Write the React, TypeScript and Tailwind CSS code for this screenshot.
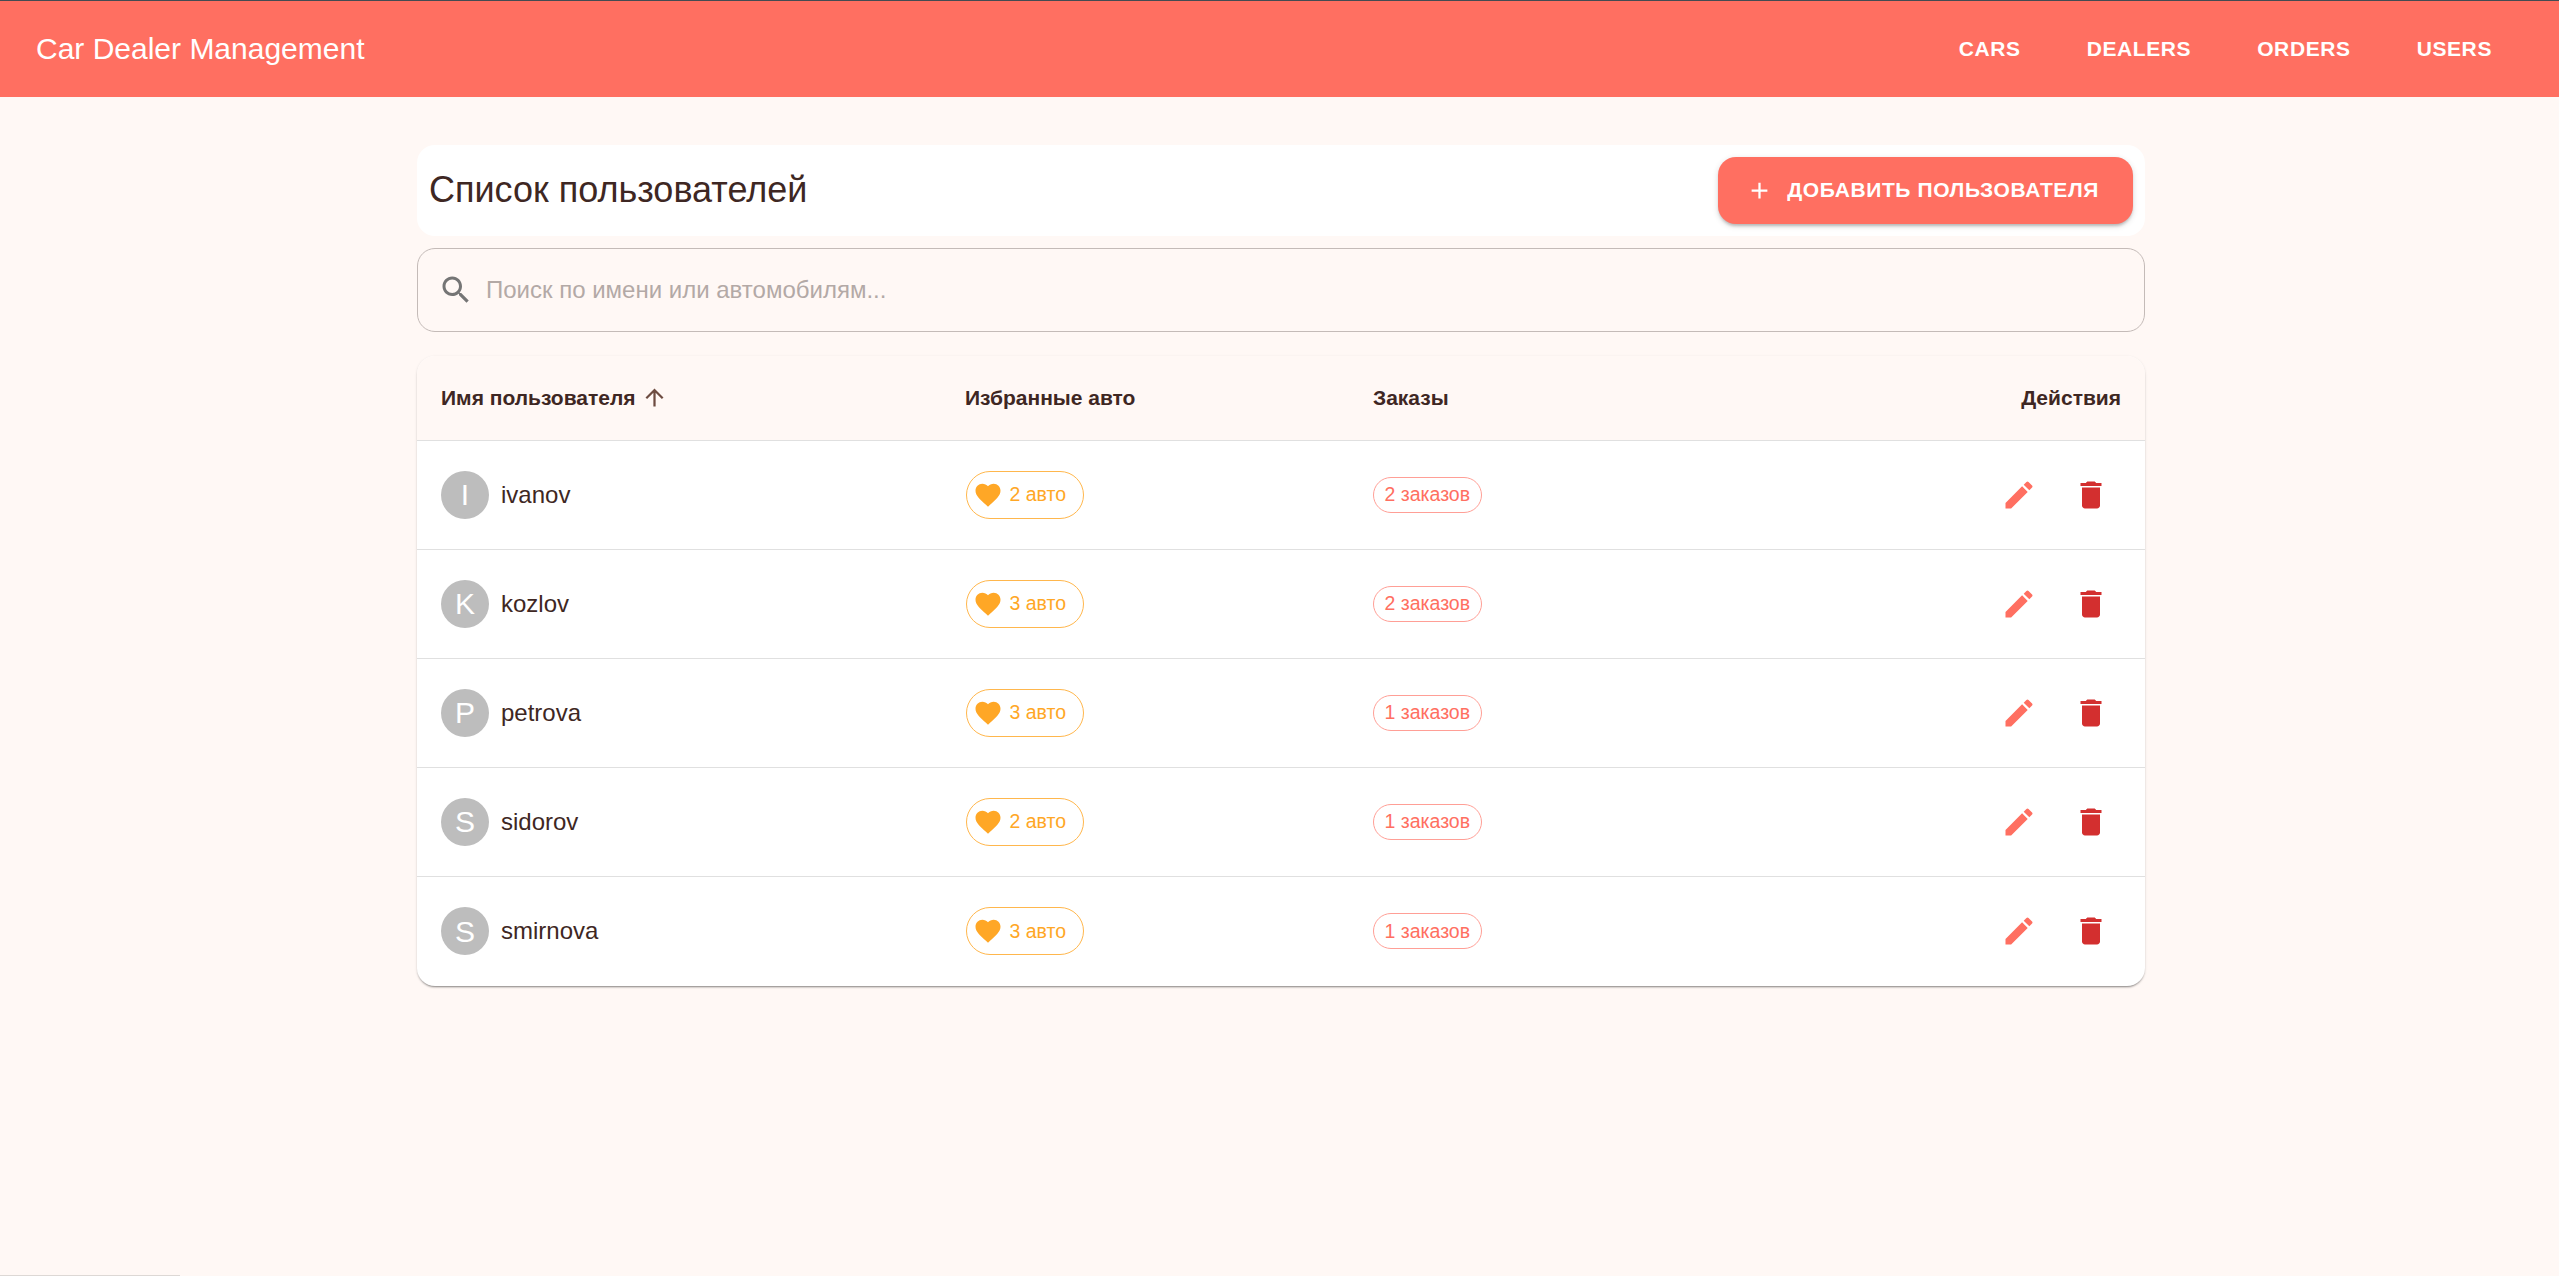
import type { ReactNode } from 'react'

const users = [
  { name: 'ivanov', favorites: 2, orders: 2 },
  { name: 'kozlov', favorites: 3, orders: 2 },
  { name: 'petrova', favorites: 3, orders: 1 },
  { name: 'sidorov', favorites: 2, orders: 1 },
  { name: 'smirnova', favorites: 3, orders: 1 },
]

function Icon({ d, className }: { d: string; className: string }) {
  return (
    <svg viewBox="0 0 24 24" fill="currentColor" className={className}>
      <path d={d} />
    </svg>
  )
}

const paths = {
  heart: 'm12 21.35-1.45-1.32C5.4 15.36 2 12.28 2 8.5 2 5.42 4.42 3 7.5 3c1.74 0 3.41.81 4.5 2.09C13.09 3.81 14.76 3 16.5 3 19.58 3 22 5.42 22 8.5c0 3.78-3.4 6.86-8.55 11.54L12 21.35z',
  edit: 'M3 17.25V21h3.75L17.81 9.94l-3.75-3.75L3 17.25zM20.71 7.04c.39-.39.39-1.02 0-1.41l-2.34-2.34a.9959.9959 0 0 0-1.41 0l-1.83 1.83 3.75 3.75 1.83-1.83z',
  trash: 'M6 19c0 1.1.9 2 2 2h8c1.1 0 2-.9 2-2V7H6v12zM19 4h-3.5l-1-1h-5l-1 1H5v2h14V4z',
  search: 'M15.5 14h-.79l-.28-.27C15.41 12.59 16 11.11 16 9.5 16 5.91 13.09 3 9.5 3S3 5.91 3 9.5 5.91 16 9.5 16c1.61 0 3.09-.59 4.23-1.57l.27.28v.79l5 4.99L20.49 19l-4.99-5zm-6 0C7.01 14 5 11.99 5 9.5S7.01 5 9.5 5 14 7.01 14 9.5 11.99 14 9.5 14z',
  add: 'M19 13h-6v6h-2v-6H5v-2h6V5h2v6h6v2z',
  arrowUp: 'M4 12l1.41 1.41L11 7.83V20h2V7.83l5.58 5.59L20 12l-8-8-8 8z',
}

function NavLink({ children }: { children: ReactNode }) {
  return <a className="px-[24px] py-[9px] text-[21px] leading-[36px] font-bold tracking-[0.6px] text-white">{children}</a>
}

function HeadCell({ children, className = '' }: { children: ReactNode; className?: string }) {
  return <th className={`px-[24px] text-left text-[21px] font-bold text-[#3e2723] ${className}`}>{children}</th>
}

function UserRow({ name, favorites, orders }: { name: string; favorites: number; orders: number }) {
  return (
    <tr className="h-[109px] border-b border-[#e0e0e0] last:h-[110px] last:border-b-0">
      <td className="px-[24px]">
        <div className="flex items-center gap-[12px]">
          <div className="flex h-[48px] w-[48px] items-center justify-center rounded-full bg-[#bdbdbd] text-[30px] text-white">
            {name[0].toUpperCase()}
          </div>
          <span className="text-[24px] text-[#3e2723]">{name}</span>
        </div>
      </td>
      <td className="pr-[24px] pl-[25px]">
        <div className="inline-flex h-[48px] items-center rounded-full border border-[#ffb74d] pr-[17px] pl-[6px] text-[19.5px] text-[#ffa726] align-middle">
          <Icon d={paths.heart} className="h-[30px] w-[30px]" />
          <span className="ml-[6.5px]">{favorites} авто</span>
        </div>
      </td>
      <td className="px-[24px]">
        <div className="inline-flex h-[36px] items-center rounded-full border border-[#ff9f96] px-[10.5px] text-[19.5px] text-[#ff6f61] align-middle">
          {orders} заказов
        </div>
      </td>
      <td className="pr-[18px] text-right">
        <div className="flex items-center justify-end">
          <button className="flex h-[60px] w-[72px] items-center justify-center text-[#ff6f61]">
            <Icon d={paths.edit} className="h-[36px] w-[36px]" />
          </button>
          <button className="flex h-[60px] w-[72px] items-center justify-center text-[#d32f2f]">
            <Icon d={paths.trash} className="h-[36px] w-[36px]" />
          </button>
        </div>
      </td>
    </tr>
  )
}

export default function App() {
  return (
    <div className="relative min-h-screen bg-[#fff8f5] font-['Liberation_Sans',Arial,sans-serif]">
      <header className="flex h-[97px] items-center justify-between border-t border-[#444b52] bg-[#ff6f61] pr-[43px] pl-[36px]">
        <h1 className="pb-[2px] text-[30px] text-white">Car Dealer Management</h1>
        <nav className="flex gap-[18px]">
          <NavLink>CARS</NavLink>
          <NavLink>DEALERS</NavLink>
          <NavLink>ORDERS</NavLink>
          <NavLink>USERS</NavLink>
        </nav>
      </header>

      <main className="ml-[417px] w-[1728px] pt-[48px]">
        <div className="flex h-[91px] items-center justify-between rounded-[18px] bg-white pr-[12px] pl-[12px]">
          <h2 className="pb-[2px] text-[36px] text-[#3e2723]">Список пользователей</h2>
          <button className="flex h-[67px] items-center gap-[14.5px] rounded-[18px] bg-[#ff6f61] pr-[34px] pl-[27.5px] text-[21px] font-bold tracking-[0.6px] text-white shadow-[0_3px_3px_-1px_rgba(0,0,0,0.2),0_2px_6px_0_rgba(0,0,0,0.14)]">
            <Icon d={paths.add} className="h-[27px] w-[27px]" />
            <span className="pb-[2px]">ДОБАВИТЬ ПОЛЬЗОВАТЕЛЯ</span>
          </button>
        </div>

        <div className="mt-[12px] flex h-[84px] items-center rounded-[18px] border border-[#c4bbb8] pl-[20px]">
          <Icon d={paths.search} className="h-[36px] w-[36px] text-[#757575]" />
          <input
            placeholder="Поиск по имени или автомобилям..."
            className="ml-[12px] flex-1 bg-transparent text-[24px] text-[#3e2723] outline-none placeholder:text-[#b3a9a6]"
          />
        </div>

        <div className="mt-[24px] overflow-hidden rounded-[18px] bg-white shadow-[0_2px_2px_-1px_rgba(0,0,0,0.4),0_1px_3px_0_rgba(0,0,0,0.12)]">
          <table className="w-full table-fixed border-collapse">
            <colgroup>
              <col className="w-[524px]" />
              <col className="w-[408px]" />
              <col />
              <col className="w-[300px]" />
            </colgroup>
            <thead>
              <tr className="h-[84px] border-b border-[#e0e0e0] bg-[#fff8f5]">
                <HeadCell>
                  <span className="inline-flex items-center">
                    Имя пользователя
                    <Icon d={paths.arrowUp} className="ml-[5px] h-[27px] w-[27px] text-[#6d4c41]" />
                  </span>
                </HeadCell>
                <HeadCell>Избранные авто</HeadCell>
                <HeadCell>Заказы</HeadCell>
                <HeadCell className="text-right">Действия</HeadCell>
              </tr>
            </thead>
            <tbody>
              {users.map((user) => (
                <UserRow key={user.name} {...user} />
              ))}
            </tbody>
          </table>
        </div>
      </main>

      <div className="absolute bottom-0 left-0 h-px w-[180px] bg-[#ddd8d5]" />
    </div>
  )
}
